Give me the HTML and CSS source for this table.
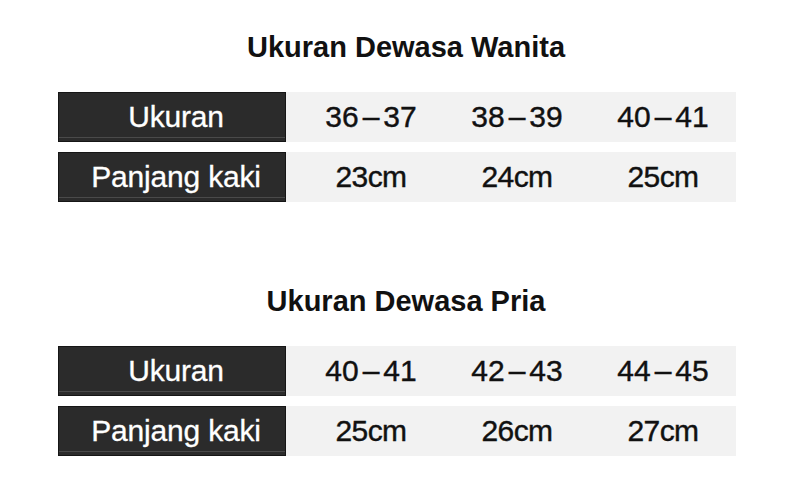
FILE: index.html
```html
<!DOCTYPE html>
<html lang="id">
<head>
<meta charset="utf-8">
<title>Ukuran</title>
<link rel="stylesheet" href="styles.css">
</head>
<body>
<main class="page">
  <section class="section">
    <h2 class="title">Ukuran Dewasa Wanita</h2>
    <div class="table">
      <div class="row">
        <div class="head">Ukuran</div>
        <div class="cells">
          <div class="cell">36<span class="dash">–</span>37</div>
          <div class="cell">38<span class="dash">–</span>39</div>
          <div class="cell">40<span class="dash">–</span>41</div>
        </div>
      </div>
      <div class="row">
        <div class="head">Panjang kaki</div>
        <div class="cells">
          <div class="cell cm">23cm</div>
          <div class="cell cm">24cm</div>
          <div class="cell cm">25cm</div>
        </div>
      </div>
    </div>
  </section>
  <section class="section second">
    <h2 class="title">Ukuran Dewasa Pria</h2>
    <div class="table">
      <div class="row">
        <div class="head">Ukuran</div>
        <div class="cells">
          <div class="cell">40<span class="dash">–</span>41</div>
          <div class="cell">42<span class="dash">–</span>43</div>
          <div class="cell">44<span class="dash">–</span>45</div>
        </div>
      </div>
      <div class="row">
        <div class="head">Panjang kaki</div>
        <div class="cells">
          <div class="cell cm">25cm</div>
          <div class="cell cm">26cm</div>
          <div class="cell cm">27cm</div>
        </div>
      </div>
    </div>
  </section>
</main>
</body>
</html>
```
FILE: styles.css
```css
html, body {
  margin: 0;
  padding: 0;
  background: #ffffff;
}
body {
  font-family: "Liberation Sans", Arial, sans-serif;
  color: #111111;
  width: 790px;
  height: 496px;
  overflow: hidden;
}
.page {
  padding: 31px 0 0 58px;
  width: 678px;
}
.section.second {
  margin-top: 83px;
}
.title {
  margin: 0 0 29px 0;
  padding-left: 18px;
  text-align: center;
  font-size: 29px;
  line-height: 32px;
  font-weight: bold;
  letter-spacing: 0;
  color: #111111;
}
.table {
  display: flex;
  flex-direction: column;
  gap: 10px;
}
.row {
  display: flex;
  height: 50px;
}
.head {
  box-sizing: border-box;
  width: 228px;
  height: 50px;
  background: #2b2b2b;
  border: 1px solid #161616;
  box-shadow: inset 0 -3px 0 #2b2b2b, inset 0 -4px 0 #4a4a4a;
  color: #ffffff;
  font-size: 30px;
  line-height: 48px;
  letter-spacing: -0.2px;
  text-align: center;
  padding-left: 8px;
  -webkit-text-stroke: 0.3px #ffffff;
}
.cells {
  display: flex;
  box-sizing: border-box;
  width: 450px;
  padding-left: 12px;
  background: #f2f2f2;
}
.cell {
  width: 146px;
  font-size: 30px;
  line-height: 50px;
  text-align: center;
  color: #111111;
  -webkit-text-stroke: 0.4px #111111;
}
.cell.cm {
  letter-spacing: -0.6px;
}
.dash {
  margin: 0 4px;
}
```
